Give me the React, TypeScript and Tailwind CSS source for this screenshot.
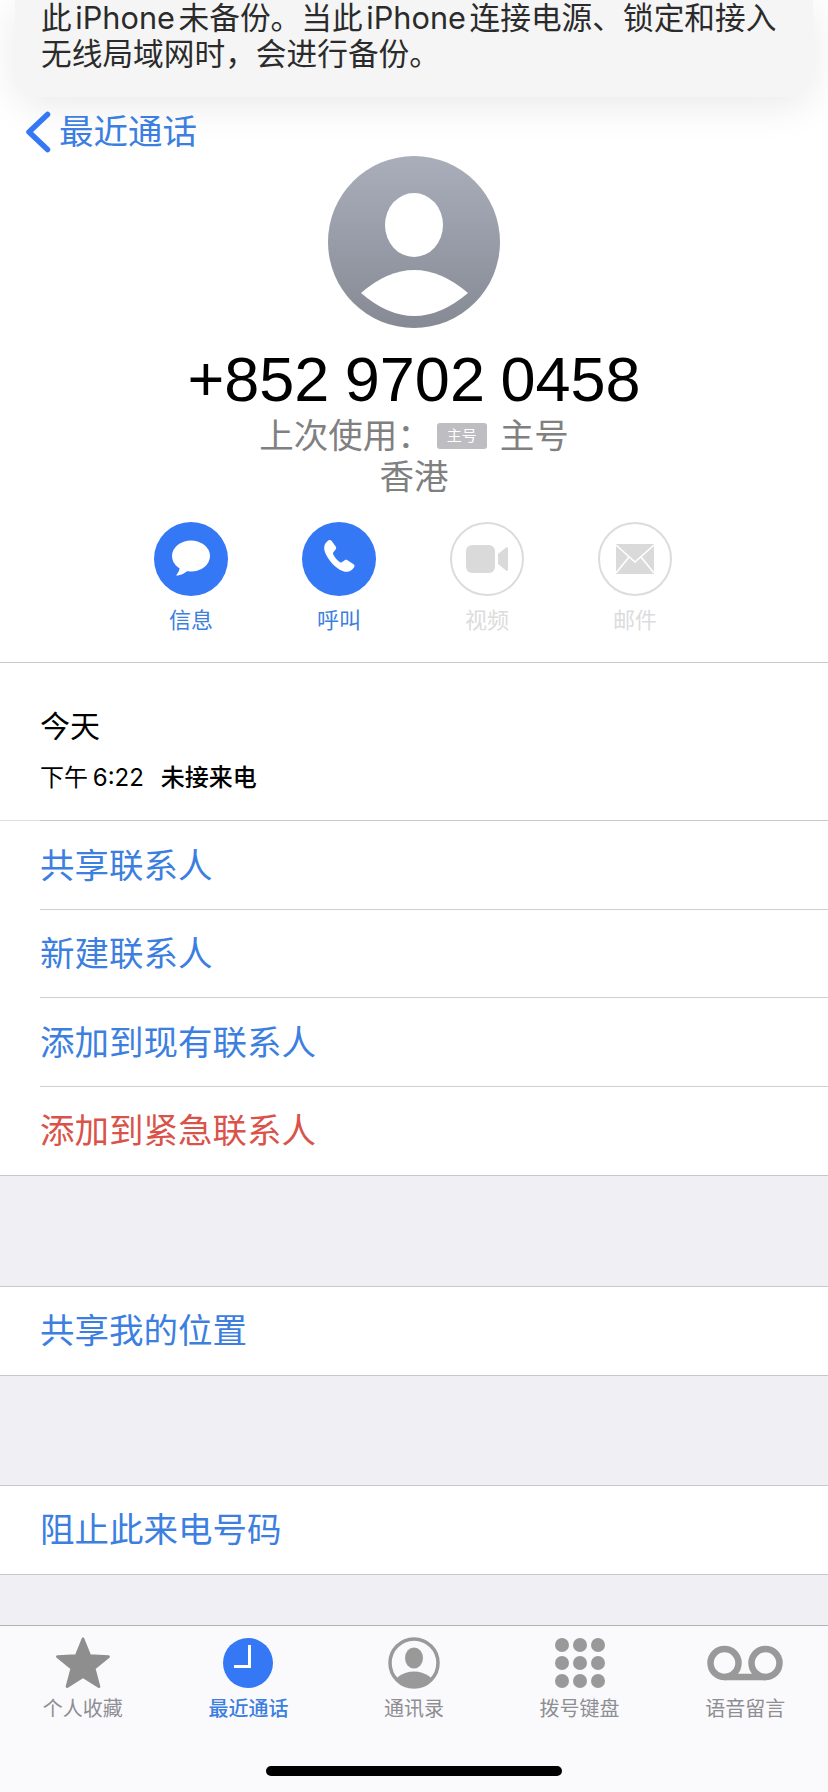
import React from 'react';

const ACTIONS = [
  { label: '信息', active: true, icon: 'message' },
  { label: '呼叫', active: true, icon: 'phone' },
  { label: '视频', active: false, icon: 'video' },
  { label: '邮件', active: false, icon: 'mail' },
];

function ActionIcon({ name }: { name: string }) {
  if (name === 'message') {
    return (
      <svg width="40" height="40" viewBox="0 0 40 40" fill="#fff">
        <ellipse cx="20" cy="17" rx="19" ry="15.5" />
        <path d="M9 26 C9 31 7 34 5 36.5 C10 36.5 15 34 18 30 Z" />
      </svg>
    );
  }
  if (name === 'phone') {
    return (
      <svg width="46" height="46" viewBox="0 0 24 24" fill="#fff">
        <path d="M6.6 2.2c.5-.3 1.1-.2 1.5.3l2.2 3c.3.5.3 1 0 1.4l-1.3 1.7c-.2.3-.2.6 0 1 .7 1.4 2 3 3.5 4.1.3.2.6.2.9 0l1.6-1.1c.4-.3 1-.3 1.4 0l3.2 2.2c.5.3.6 1 .3 1.5-.9 1.4-2.2 2.4-3.8 2.4-2.3 0-5.5-1.9-8-4.8C5.3 10.6 4 7.6 4.3 5.6c.2-1.4 1.1-2.6 2.3-3.4z" />
      </svg>
    );
  }
  if (name === 'video') {
    return (
      <svg width="42" height="28" viewBox="0 0 42 28" fill="#dadada">
        <rect x="0" y="0" width="29" height="28" rx="6" />
        <path d="M32 9 L40 2.5 C41 1.8 42 2.4 42 3.5 V24.5 C42 25.6 41 26.2 40 25.5 L32 19 Z" />
      </svg>
    );
  }
  return (
    <svg width="38" height="30" viewBox="0 0 38 30">
      <rect x="0" y="0" width="38" height="30" fill="#dadada" />
      <path d="M0 1 L19 18 L38 1 M0 29 L13 13 M38 29 L25 13" fill="none" stroke="#fff" strokeWidth="1.6" />
    </svg>
  );
}

function ListRow({ label, red, inset = true }: { label: string; red?: boolean; inset?: boolean }) {
  return (
    <div className={inset ? 'pl-10 bg-white' : 'pl-10 bg-white border-b border-[#c8c8cc]'}>
      <div className={inset ? 'h-[88.5px] pt-[2px] flex items-center border-b border-[#cfcfd1]' : 'h-[88px] pt-[2px] flex items-center'}>
        <span className={red ? 'text-[34.5px] leading-none text-[#d9534a]' : 'text-[34.5px] leading-none text-[#3c7fe0]'}>
          {label}
        </span>
      </div>
    </div>
  );
}

function TabIcon({ name }: { name: string }) {
  if (name === 'star') {
    return (
      <svg width="56" height="52" viewBox="0 0 58 54" fill="#8e8e8e" stroke="#8e8e8e" strokeWidth="3" strokeLinejoin="round">
        <path d="M29 2 L36 19.5 L55.5 20.5 L40.5 32.5 L45.5 51.5 L29 41 L12.5 51.5 L17.5 32.5 L2.5 20.5 L22 19.5 Z" />
      </svg>
    );
  }
  if (name === 'clock') {
    return (
      <svg width="50" height="50" viewBox="0 0 50 50">
        <circle cx="25" cy="25" r="25" fill="#3478f6" />
        <path d="M26.5 7 V28.5 H11" fill="none" stroke="#fff" strokeWidth="3" />
      </svg>
    );
  }
  if (name === 'contact') {
    return (
      <svg width="52" height="52" viewBox="0 0 52 52">
        <defs>
          <clipPath id="contact-clip">
            <circle cx="26" cy="26" r="23" />
          </clipPath>
        </defs>
        <circle cx="26" cy="26" r="24" fill="none" stroke="#999" strokeWidth="3.5" />
        <ellipse cx="26" cy="21" rx="9" ry="10.5" fill="#999" />
        <ellipse cx="26" cy="50" rx="21" ry="15.5" fill="#999" clipPath="url(#contact-clip)" />
      </svg>
    );
  }
  if (name === 'keypad') {
    return (
      <svg width="50" height="50" viewBox="0 0 50 50" fill="#999">
        {[7, 25, 43].map((y) =>
          [7, 25, 43].map((x) => <ellipse key={`${x}-${y}`} cx={x} cy={y} rx="7" ry="7" />)
        )}
      </svg>
    );
  }
  return (
    <svg width="76" height="36" viewBox="0 0 76 36" fill="none" stroke="#999" strokeWidth="6.5">
      <circle cx="17.5" cy="18" r="14" />
      <circle cx="58.5" cy="18" r="14" />
      <path d="M17.5 32 H58.5" />
    </svg>
  );
}

const TABS = [
  { label: '个人收藏', icon: 'star' },
  { label: '最近通话', icon: 'clock', active: true },
  { label: '通讯录', icon: 'contact' },
  { label: '拨号键盘', icon: 'keypad' },
  { label: '语音留言', icon: 'voicemail' },
];

export default function App() {
  return (
    <div
      className="w-[828px] h-[1792px] overflow-hidden bg-white flex flex-col"
      style={{ fontFamily: 'Inter, "Noto Sans CJK SC", sans-serif' }}
    >
      {/* Backup notification, cut by the top of the screen */}
      <div className="mx-[15px] h-[97px] shrink-0 rounded-b-[24px] bg-[#f5f5f5] shadow-[0_8px_40px_rgba(0,0,0,0.09)] pl-[26px] text-[30.7px] leading-[36px] text-[#2b2b2b]">
        <div className="whitespace-nowrap [word-spacing:-5px]">此 iPhone 未备份。当此 iPhone 连接电源、锁定和接入</div>
        <div className="whitespace-nowrap">无线局域网时，会进行备份。</div>
      </div>

      {/* Back link */}
      <div className="h-[59px] shrink-0 flex items-center pl-[25px] pt-[11px] gap-2">
        <svg width="26" height="42" viewBox="0 0 26 42" fill="none" stroke="#3478f6" strokeWidth="5.5" strokeLinecap="round" strokeLinejoin="round">
          <path d="M22.5 3.5 L4 21 L22.5 38.5" />
        </svg>
        <span className="text-[34.5px] leading-none text-[#3c7fe0]">最近通话</span>
      </div>

      {/* Contact header */}
      <div className="flex flex-col items-center shrink-0">
        <svg width="172" height="172" viewBox="0 0 172 172">
          <defs>
            <linearGradient id="avatar-fill" x1="0" y1="0" x2="0" y2="1">
              <stop offset="0" stopColor="#aaaeba" />
              <stop offset="1" stopColor="#858a95" />
            </linearGradient>
          </defs>
          <circle cx="86" cy="86" r="86" fill="url(#avatar-fill)" />
          <ellipse cx="86" cy="69" rx="29" ry="32" fill="#fff" />
          <path d="M33 137 Q86 91 140 137 Q86 183 33 137 Z" fill="#fff" />
        </svg>
        <div className="mt-[17px] text-[63px] leading-[68px] text-black [font-family:'Liberation_Sans',sans-serif] [word-spacing:-2px]">+852 9702 0458</div>
        <div className="mt-[2px] flex items-center text-[34.5px] leading-[42px] text-[#808080]">
          <span>上次使用：</span>
          <span className="ml-[5px] w-[50px] h-[26px] rounded-[3px] bg-[#bdbdc2] text-white text-[15px] leading-[26px] text-center">主号</span>
          <span className="ml-[13px]">主号</span>
        </div>
        <div className="mt-[-1px] text-[34.5px] leading-[42px] text-[#808080]">香港</div>
      </div>

      {/* Actions */}
      <div className="mt-6 h-[141px] shrink-0 pl-[117px] grid grid-cols-[148px_148px_148px_148px] border-b border-[#c8c8cc]">
        {ACTIONS.map((action) => (
          <div key={action.label} className="flex flex-col items-center">
            <div
              className={
                action.active
                  ? 'w-[74px] h-[74px] rounded-full bg-[#3478f6] flex items-center justify-center'
                  : 'w-[74px] h-[74px] rounded-full border-2 border-[#dcdcdc] flex items-center justify-center'
              }
            >
              <ActionIcon name={action.icon} />
            </div>
            <span className={action.active ? 'mt-[10px] text-[22px] leading-[28px] text-[#3c7fe0]' : 'mt-[10px] text-[22px] leading-[28px] text-[#dcdcdc]'}>
              {action.label}
            </span>
          </div>
        ))}
      </div>

      {/* Call history */}
      <div className="h-[157px] shrink-0 pl-10 pt-[43px]">
        <div className="text-[30px] leading-[40px] text-black">今天</div>
        <div className="mt-[17px] flex text-[24px] leading-[30px] text-black">
          <span className="[word-spacing:-2px]">下午 6:22</span>
          <span className="ml-[17px] font-medium">未接来电</span>
        </div>
      </div>
      <div className="h-px shrink-0 bg-[#e0e0e0]">
        <div className="ml-10 h-[2px] bg-[#c8c8cc]" />
      </div>

      <ListRow label="共享联系人" />
      <ListRow label="新建联系人" />
      <ListRow label="添加到现有联系人" />
      <ListRow label="添加到紧急联系人" red inset={false} />

      {/* Lower groups */}
      <div className="flex-1 bg-[#efeff4] flex flex-col">
        <div className="mt-[110px] border-t border-[#c8c8cc]">
          <ListRow label="共享我的位置" inset={false} />
        </div>
        <div className="mt-[109px] border-t border-[#c8c8cc]">
          <ListRow label="阻止此来电号码" inset={false} />
        </div>
      </div>

      {/* Tab bar */}
      <div className="h-[167px] shrink-0 relative bg-[#fafafc] border-t border-[#b2b2b2]">
        <div className="grid grid-cols-5">
          {TABS.map((tab) => (
            <div key={tab.label} className="flex flex-col items-center">
              <div className="h-[70px] flex items-center justify-center pt-[4px]">
                <TabIcon name={tab.icon} />
              </div>
              <span className={tab.active ? 'text-[20px] leading-[26px] font-medium text-[#3c7fe0]' : 'text-[20px] leading-[26px] text-[#8e8e93]'}>
                {tab.label}
              </span>
            </div>
          ))}
        </div>
        <div className="absolute left-[266px] bottom-[16px] w-[296px] h-[10px] rounded-full bg-black" />
      </div>
    </div>
  );
}
